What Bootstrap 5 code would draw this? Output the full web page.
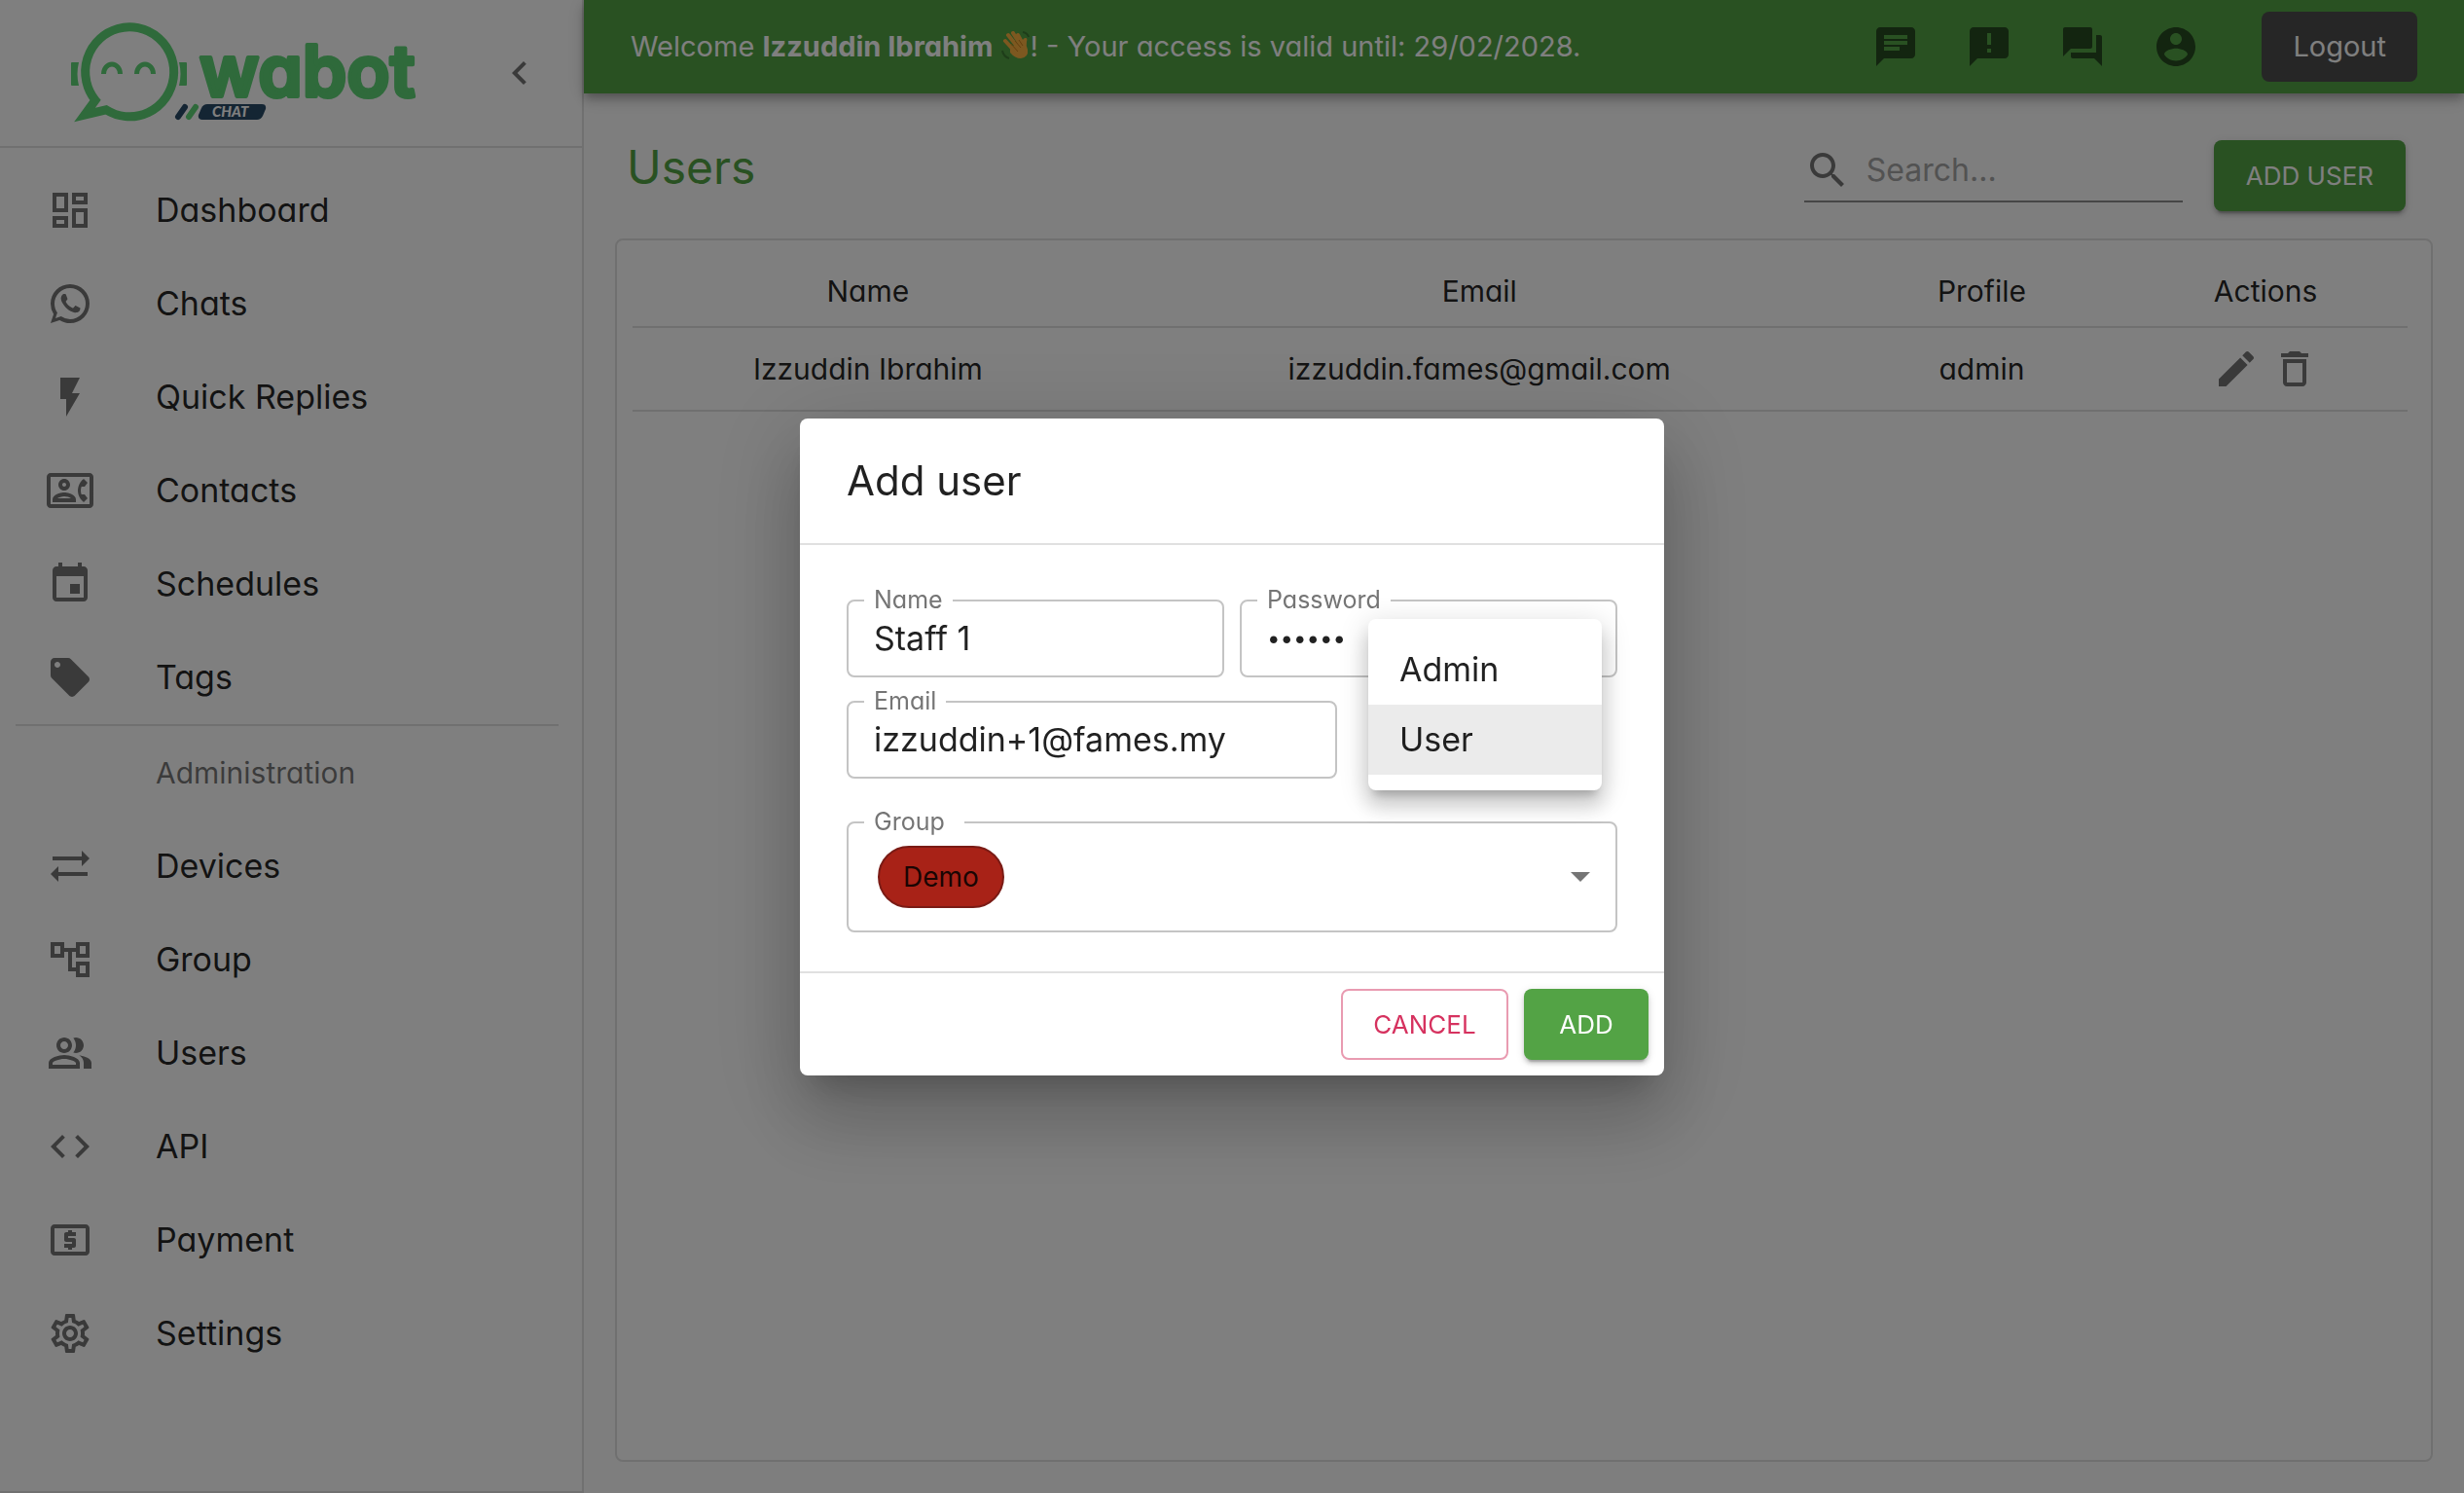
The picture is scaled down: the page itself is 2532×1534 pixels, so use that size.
<!DOCTYPE html>
<html lang="en">
<head>
<meta charset="utf-8">
<meta name="viewport" content="width=device-width, initial-scale=1">
<title>Wabot - Users</title>
<link href="https://cdn.jsdelivr.net/npm/bootstrap@5.3.0/dist/css/bootstrap.min.css" rel="stylesheet">
<style>
  :root {
    --brand: #53a345;
    --ink: rgba(0, 0, 0, .87);
    --muted: rgba(0, 0, 0, .54);
    --line: #e0e0e0;
  }
  body {
    font-family: Inter, "Open Sans", sans-serif;
    font-feature-settings: "cv11";
    font-size: 34px;
    line-height: 48px;
    color: var(--ink);
    background: #fcfcfc;
  }
  .mi { width: 48px; height: 48px; fill: currentColor; flex: none; display: block; }

  /* Drawer */
  .drawer { width: 600px; background: #fff; border-right: 2px solid var(--line); border-bottom: 2px solid var(--line); }
  .drawer-head { height: 152px; border-bottom: 2px solid var(--line); padding: 0 40px 0 72px; }
  .logo { width: 356px; height: 108px; }
  .drawer .icon-btn { color: #757575; }
  .menu-link { display: flex; align-items: center; height: 96px; padding: 0 48px; gap: 64px; color: var(--ink); text-decoration: none; }
  .menu-link .mi { color: #757575; }
  .menu-rule { height: 2px; background: var(--line); margin: 0 24px 0 16px; }
  .menu-title { height: 96px; line-height: 96px; padding-left: 160px; font-size: 30px; color: var(--muted); }
  .icon-btn { border: 0; background: none; padding: 0; color: inherit; }

  /* Top bar */
  .topbar { height: 96px; background: var(--brand); padding: 0 48px; z-index: 2;
    box-shadow: 0 4px 8px -2px rgba(0,0,0,.2), 0 8px 10px rgba(0,0,0,.14), 0 2px 20px rgba(0,0,0,.12); }
  .topbar .icons { gap: 48px; margin-right: 64px; color: #264b20; }
  .welcome { color: #fff; font-size: 29px; }
  .welcome b { font-weight: 700; }
  .wave { width: 30px; height: 30px; vertical-align: -4px; }
  .btn-ui { font-size: 26px; line-height: 49px; padding: 12px 33px; border-radius: 8px; border: 0; min-width: 128px; }
  .btn-dark-ui { background: #4c4c4c; color: #fff; font-size: 29px; line-height: 48px; padding: 12px 32px; }
  .btn-brand { background: var(--brand); color: #fff;
    box-shadow: 0 6px 2px -4px rgba(0,0,0,.2), 0 4px 4px rgba(0,0,0,.14), 0 2px 10px rgba(0,0,0,.12); }
  .btn-cancel { color: #d6325f; border: 2px solid #e99bb1; padding: 10px 30px; background: #fff; min-width: 172px; }

  /* Page */
  .page { padding: 48px 32px 32px; }
  .page-title { font-size: 48px; line-height: 56px; font-weight: 400; color: var(--brand); margin: 0; }
  .page-head { padding: 0 28px 0 12px; margin-bottom: 28px; }
  .search { width: 389px; height: 64px; border-bottom: 2px solid #8c8c8c; margin-right: 32px; color: #757575; }
  .search input { border: 0; outline: 0; background: none; min-width: 0; flex: 1; padding: 0 0 0 16px; font-size: 32px; }
  .search input::placeholder { color: #a4a4a4; opacity: 1; }
  .panel { background: #fff; border: 2px solid var(--line); border-radius: 8px; padding: 16px 24px 16px 16px; }
  .users { font-size: 30px; margin: 0; table-layout: fixed; border-color: var(--line); --bs-table-bg: transparent; --bs-table-color: var(--ink); }
  .users th, .users td { font-weight: 400; text-align: center; vertical-align: middle; padding: 12px 48px 12px 32px; border-bottom: 2px solid var(--line); }
  .users th:last-child, .users td:last-child { padding-right: 32px; }
  .users .acts { color: #757575; gap: 12px; height: 60px; }

  /* Dialog */
  .modal-dialog { max-width: 888px; }
  .modal-content { border: 0; border-radius: 8px; color: var(--ink);
    box-shadow: 0 22px 30px -14px rgba(0,0,0,.2), 0 48px 76px 6px rgba(0,0,0,.14), 0 18px 92px 16px rgba(0,0,0,.12); }
  .dlg-head { padding: 32px 48px; border-bottom: 2px solid var(--line); }
  .dlg-head h2 { font-size: 42px; line-height: 64px; font-weight: 400; margin: 0; }
  .dlg-body { padding: 56px 48px 40px; }
  .dlg-foot { padding: 16px; gap: 16px; border-top: 2px solid var(--line); }
  .outlined { position: relative; }
  .outlined label { position: absolute; top: -14px; left: 18px; padding: 0 10px; background: #fff; font-size: 25px; line-height: 28px; color: #757575; z-index: 1; }
  .outlined input, .chip-select { width: 100%; border: 2px solid #c4c4c4; border-radius: 8px; padding: 0 26px; background: #fff; color: var(--ink); outline: 0; }
  .outlined input { height: 80px; }
  .outlined input[type=password] { font-size: 24px; }
  .email-box { width: 504px; }
  .group-box { margin-top: 44px; }
  .group-box label { padding-right: 20px; }
  .chip-select { height: 114px; padding: 0 26px 0 30px; }
  .chip { background: #a82217; border: 2px solid #7a1b15; border-radius: 32px; height: 64px; line-height: 60px; padding: 0 24px; font-size: 28px; }
  .caret { border: 10px solid transparent; border-top-color: #757575; border-bottom: 0; }
  .role-slot { position: relative; width: 240px; margin: 0 16px 0 32px; }
  .role-menu { top: -84px; left: 0; width: 240px; border: 0; border-radius: 8px; padding: 16px 0; margin: 0; font-size: 34px;
    box-shadow: 0 10px 10px -6px rgba(0,0,0,.2), 0 16px 20px 2px rgba(0,0,0,.14), 0 6px 28px 4px rgba(0,0,0,.12); }
  .role-menu .dropdown-item { padding: 12px 32px; line-height: 48px; color: var(--ink); }
  .role-menu .dropdown-item.active { background: #ebebeb; }
</style>
<script src="https://cdn.jsdelivr.net/npm/bootstrap@5.3.0/dist/js/bootstrap.bundle.min.js"></script>
</head>
<body class="vh-100 overflow-hidden">
<div class="d-flex h-100">
  <aside class="drawer flex-shrink-0">
    <div class="drawer-head d-flex align-items-center justify-content-between">
      <svg class="logo" viewBox="72 21 356 108" role="img" aria-label="wabot chat">
        <path d="M98 103A45.500 46 0 1 1 109 112.800L87 118Z" fill="none" stroke="#5ed476" stroke-width="9"/>
        <path d="M74 64h7q-3 12 0 24h-7q-1 0-1-1V65q0-1 1-1zM184 64h7q1 0 1 1v22q0 1-1 1h-7q3-12 0-24z" fill="#5ed476"/>
        <path d="M106.500 76a8.500 10 0 0 1 17 0M140.500 76a8.500 10 0 0 1 17 0" fill="none" stroke="#5ed476" stroke-width="5"/>
        <text x="205" y="99" font-family="Inter" font-size="73" font-weight="600" fill="#5ed476" stroke="#5ed476" stroke-width="4" stroke-linejoin="round">wabot</text>
        <path d="M183 120l7-10" stroke="#284a66" stroke-width="6" stroke-linecap="round"/>
        <path d="M194 120l7-10" stroke="#5ed476" stroke-width="6" stroke-linecap="round"/>
        <path d="M213 107h56q5 0 4 5l-3 7q-2 4-6 4h-56q-5 0-4-5l3-7q2-4 6-4z" fill="#284a66"/>
        <text x="218" y="120" font-family="Lato" font-size="15" font-weight="900" font-style="italic" fill="#fff">CHAT</text>
      </svg>
      <button class="icon-btn" type="button" aria-label="Collapse menu"><svg class="mi" viewBox="0 0 24 24"><path d="M15.410 7.410L14 6l-6 6 6 6 1.410-1.410L10.830 12z"/></svg></button>
    </div>
    <nav class="pt-3" aria-label="Main">
      <a class="menu-link" href="#"><svg class="mi" viewBox="0 0 24 24"><path d="M19 5v2h-4V5h4M9 5v6H5V5h4m10 8v6h-4v-6h4M9 17v2H5v-2h4M21 3h-8v6h8V3zM11 3H3v10h8V3zm10 8h-8v10h8V11zm-10 4H3v6h8v-6z"/></svg><span>Dashboard</span></a>
      <a class="menu-link" href="#"><svg class="mi" viewBox="0 0 24 24"><path d="M16.750 13.960c.25.13.41.2.46.3.06.11.04.61-.21 1.180-.2.56-1.240 1.100-1.700 1.120-.46.02-.47.36-2.960-.73-2.490-1.090-3.990-3.750-4.110-3.920-.12-.17-.96-1.380-.92-2.610.05-1.220.69-1.800.95-2.040.24-.26.51-.29.68-.26h.47c.15 0 .36-.06.55.45l.69 1.870c.06.13.1.28.01.44l-.27.41-.39.42c-.12.12-.26.25-.12.5.12.26.62 1.090 1.320 1.780.91.88 1.710 1.170 1.950 1.300.24.14.39.12.54-.04l.81-.94c.19-.25.35-.19.58-.11l1.670.88M12 2a10 10 0 0 1 10 10 10 10 0 0 1-10 10c-1.970 0-3.800-.57-5.350-1.550L2 22l1.550-4.650A9.969 9.969 0 0 1 2 12 10 10 0 0 1 12 2m0 2a8 8 0 0 0-8 8c0 1.720.54 3.310 1.460 4.610L4.500 19.500l2.890-.96A7.950 7.950 0 0 0 12 20a8 8 0 0 0 8-8 8 8 0 0 0-8-8z"/></svg><span>Chats</span></a>
      <a class="menu-link" href="#"><svg class="mi" viewBox="0 0 24 24"><path d="M7 2v11h3v9l7-12h-4l4-8z"/></svg><span>Quick Replies</span></a>
      <a class="menu-link" href="#"><svg class="mi" viewBox="0 0 24 24"><path d="M22 3H2C.9 3 0 3.900 0 5v14c0 1.100.9 2 2 2h20c1.100 0 1.990-.9 1.990-2L24 5c0-1.100-.9-2-2-2zm0 16H2V5h20v14zm-2.990-1.010L21 16l-1.510-2h-1.640c-.22-.63-.35-1.300-.35-2s.13-1.370.35-2h1.640L21 8l-1.990-1.990c-1.310.98-2.280 2.370-2.730 3.990-.18.64-.28 1.310-.28 2s.1 1.360.28 2c.45 1.610 1.420 3.010 2.730 3.990zM9 12c1.650 0 3-1.350 3-3s-1.350-3-3-3-3 1.350-3 3 1.350 3 3 3zm0-4c.55 0 1 .45 1 1s-.45 1-1 1-1-.45-1-1 .45-1 1-1zm6 8.590c0-2.500-3.970-3.580-6-3.580s-6 1.080-6 3.580V18h12v-1.410zM5.480 16c.74-.5 2.220-1 3.520-1s2.770.49 3.520 1H5.480z"/></svg><span>Contacts</span></a>
      <a class="menu-link" href="#"><svg class="mi" viewBox="0 0 24 24"><path d="M17 12h-5v5h5v-5zM16 1v2H8V1H6v2H5c-1.110 0-1.990.9-1.990 2L3 19c0 1.100.89 2 2 2h14c1.100 0 2-.9 2-2V5c0-1.100-.9-2-2-2h-1V1h-2zm3 18H5V8h14v11z"/></svg><span>Schedules</span></a>
      <a class="menu-link" href="#"><svg class="mi" viewBox="0 0 24 24"><path d="M21.410 11.580l-9-9C12.050 2.220 11.550 2 11 2H4c-1.100 0-2 .9-2 2v7c0 .55.22 1.050.59 1.420l9 9c.36.36.86.58 1.410.58.55 0 1.050-.22 1.410-.59l7-7c.37-.36.59-.86.59-1.410 0-.55-.23-1.060-.59-1.420zM5.500 7C4.670 7 4 6.330 4 5.500S4.670 4 5.500 4 7 4.670 7 5.500 6.330 7 5.500 7z"/></svg><span>Tags</span></a>
      <div class="menu-rule"></div>
      <div class="menu-title">Administration</div>
      <a class="menu-link" href="#"><svg class="mi" viewBox="0 0 24 24"><path d="M22 8l-4-4v3H3v2h15v3l4-4zM2 16l4 4v-3h15v-2H6v-3l-4 4z"/></svg><span>Devices</span></a>
      <a class="menu-link" href="#"><svg class="mi" viewBox="0 0 24 24"><path d="M22 11V3h-7v3H9V3H2v8h7V8h2v10h4v3h7v-8h-7v3h-2V8h2v3h7zM7 9H4V5h3v4zm10 6h3v4h-3v-4zm0-10h3v4h-3V5z"/></svg><span>Group</span></a>
      <a class="menu-link" href="#"><svg class="mi" viewBox="0 0 24 24"><path d="M16.670 13.130C18.040 14.060 19 15.320 19 17v3h4v-3c0-2.180-3.570-3.470-6.330-3.870zM15 12c2.210 0 4-1.790 4-4s-1.790-4-4-4c-.47 0-.91.1-1.330.24C14.500 5.270 15 6.580 15 8s-.5 2.730-1.330 3.760c.42.14.86.24 1.330.24zM9 12c2.210 0 4-1.790 4-4s-1.790-4-4-4-4 1.790-4 4 1.790 4 4 4zm0-6c1.100 0 2 .9 2 2s-.9 2-2 2-2-.9-2-2 .9-2 2-2zM9 13c-2.670 0-8 1.340-8 4v3h16v-3c0-2.660-5.330-4-8-4zm6 5H3v-.99C3.200 16.290 6.300 15 9 15s5.800 1.290 6 2v1z"/></svg><span>Users</span></a>
      <a class="menu-link" href="#"><svg class="mi" viewBox="0 0 24 24"><path d="M9.400 16.600L4.800 12l4.600-4.600L8 6l-6 6 6 6 1.400-1.400zm5.200 0l4.600-4.600-4.600-4.600L16 6l6 6-6 6-1.400-1.400z"/></svg><span>API</span></a>
      <a class="menu-link" href="#"><svg class="mi" viewBox="0 0 24 24"><path d="M11 17h2v-1h1c.55 0 1-.45 1-1v-3c0-.55-.45-1-1-1h-3v-1h4V8h-2V7h-2v1h-1c-.55 0-1 .45-1 1v3c0 .55.45 1 1 1h3v1H9v2h2v1zm9-13H4c-1.110 0-1.990.89-1.990 2L2 18c0 1.110.89 2 2 2h16c1.110 0 2-.89 2-2V6c0-1.110-.89-2-2-2zm0 14H4V6h16v12z"/></svg><span>Payment</span></a>
      <a class="menu-link" href="#"><svg class="mi" viewBox="0 0 24 24"><path d="M19.430 12.980c.04-.32.07-.64.07-.98 0-.34-.03-.66-.07-.98l2.110-1.650c.19-.15.24-.42.12-.64l-2-3.460c-.09-.16-.26-.25-.44-.25-.06 0-.12.01-.17.03l-2.490 1c-.52-.4-1.080-.73-1.690-.98l-.38-2.650C14.460 2.180 14.250 2 14 2h-4c-.25 0-.46.18-.49.42l-.38 2.650c-.61.25-1.170.59-1.690.98l-2.490-1c-.06-.02-.12-.03-.18-.03-.17 0-.34.09-.43.25l-2 3.460c-.13.22-.07.49.12.64l2.110 1.650c-.04.32-.07.65-.07.98 0 .33.03.66.07.98l-2.110 1.650c-.19.15-.24.42-.12.64l2 3.460c.09.16.26.25.44.25.06 0 .12-.01.17-.03l2.490-1c.52.4 1.080.73 1.690.98l.38 2.650c.03.24.24.42.49.42h4c.25 0 .46-.18.49-.42l.38-2.650c.61-.25 1.170-.59 1.690-.98l2.490 1c.06.02.12.03.18.03.17 0 .34-.09.43-.25l2-3.460c.12-.22.07-.49-.12-.64l-2.110-1.650zm-1.980-1.710c.04.31.05.52.05.73 0 .21-.02.43-.05.73l-.14 1.130.89.7 1.080.84-.7 1.210-1.270-.51-1.040-.42-.9.68c-.43.32-.84.56-1.250.73l-1.060.43-.16 1.130-.2 1.350h-1.400l-.19-1.350-.16-1.130-1.060-.43c-.43-.18-.83-.41-1.230-.71l-.91-.7-1.060.43-1.270.51-.7-1.210 1.080-.84.89-.7-.14-1.130c-.03-.31-.05-.54-.05-.74s.02-.43.05-.73l.14-1.130-.89-.7-1.080-.84.7-1.210 1.270.51 1.040.42.9-.68c.43-.32.84-.56 1.250-.73l1.060-.43.16-1.130.2-1.350h1.390l.19 1.350.16 1.130 1.060.43c.43.18.83.41 1.230.71l.91.7 1.060-.43 1.270-.51.7 1.210-1.070.85-.89.7.14 1.130zM12 8c-2.210 0-4 1.790-4 4s1.790 4 4 4 4-1.790 4-4-1.790-4-4-4zm0 6c-1.100 0-2-.9-2-2s.9-2 2-2 2 .9 2 2-.9 2-2 2z"/></svg><span>Settings</span></a>
    </nav>
  </aside>

  <div class="d-flex flex-column flex-grow-1">
    <header class="topbar d-flex align-items-center position-relative">
      <div class="welcome flex-grow-1">Welcome <b>Izzuddin Ibrahim</b> <svg class="wave" viewBox="0 0 30 30" role="img" aria-label="waving hand"><path d="M7 4l11 14M12 2l9 14M17 4l6 11M4 10l10 11" stroke="#fbb040" stroke-width="4" stroke-linecap="round"/><path d="M9 16L21 12q1-5 4-5 2 0 1 4-1 4 1 8 1 8-7 9-6 0-11-6z" fill="#fbb040"/><path d="M14 10l6 7M10 13l7 8M18 9l4 6" stroke="#c77f1e" stroke-width="1"/><path d="M1 20q1 6 7 8M22 1q5 1 6 5" fill="none" stroke="#3c7a33" stroke-width="2"/></svg>! - Your access is valid until: 29/02/2028.</div>
      <div class="icons d-flex">
        <button class="icon-btn" type="button" aria-label="Messages"><svg class="mi" viewBox="0 0 24 24"><path d="M20 2H4c-1.100 0-1.990.9-1.990 2L2 22l4-4h14c1.100 0 2-.9 2-2V4c0-1.100-.9-2-2-2zM6 9h12v2H6V9zm8 5H6v-2h8v2zm4-6H6V6h12v2z"/></svg></button>
        <button class="icon-btn" type="button" aria-label="Announcements"><svg class="mi" viewBox="0 0 24 24"><path d="M20 2H4c-1.100 0-1.990.9-1.990 2L2 22l4-4h14c1.100 0 2-.9 2-2V4c0-1.100-.9-2-2-2zm-7 9h-2V5h2v6zm0 4h-2v-2h2v2z"/></svg></button>
        <button class="icon-btn" type="button" aria-label="Internal chat"><svg class="mi" viewBox="0 0 24 24"><path d="M21 6h-2v9H6v2c0 .55.45 1 1 1h11l4 4V7c0-.55-.45-1-1-1zm-4 6V3c0-.55-.45-1-1-1H3c-.55 0-1 .45-1 1v14l4-4h10c.55 0 1-.45 1-1z"/></svg></button>
        <button class="icon-btn" type="button" aria-label="Account"><svg class="mi" viewBox="0 0 24 24"><path d="M12 2C6.480 2 2 6.480 2 12s4.480 10 10 10 10-4.480 10-10S17.520 2 12 2zm0 3c1.660 0 3 1.340 3 3s-1.340 3-3 3-3-1.340-3-3 1.340-3 3-3zm0 14.200c-2.500 0-4.710-1.280-6-3.220.03-1.990 4-3.080 6-3.080 1.990 0 5.970 1.090 6 3.080-1.290 1.940-3.500 3.220-6 3.220z"/></svg></button>
      </div>
      <button class="btn btn-ui btn-dark-ui" type="button">Logout</button>
    </header>

    <main class="page d-flex flex-column flex-grow-1">
      <div class="page-head d-flex align-items-start">
        <h1 class="page-title flex-grow-1">Users</h1>
        <label class="search d-flex align-items-center" aria-label="Search">
          <svg class="mi" viewBox="0 0 24 24"><path d="M15.500 14h-.79l-.28-.27C15.410 12.590 16 11.110 16 9.500 16 5.910 13.090 3 9.500 3S3 5.910 3 9.500 5.910 16 9.500 16c1.610 0 3.090-.59 4.230-1.570l.27.28v.79l5 4.990L20.490 19l-4.990-5zm-6 0C7.010 14 5 11.990 5 9.500S7.010 5 9.500 5 14 7.010 14 9.500 11.990 14 9.500 14z"/></svg>
          <input type="search" placeholder="Search...">
        </label>
        <button class="btn btn-ui btn-brand" type="button">ADD USER</button>
      </div>
      <section class="panel flex-grow-1">
        <table class="table users">
          <colgroup><col style="width:27.4%"><col style="width:41.5%"><col style="width:15.1%"><col style="width:16%"></colgroup>
          <thead><tr><th scope="col">Name</th><th scope="col">Email</th><th scope="col">Profile</th><th scope="col">Actions</th></tr></thead>
          <tbody><tr>
            <td>Izzuddin Ibrahim</td><td>izzuddin.fames@gmail.com</td><td>admin</td>
            <td><div class="acts d-flex align-items-center justify-content-center">
              <button class="icon-btn" type="button" aria-label="Edit"><svg class="mi" viewBox="0 0 24 24"><path d="M3 17.250V21h3.750L17.810 9.940l-3.750-3.750L3 17.250zM20.710 7.040c.39-.39.39-1.020 0-1.410l-2.340-2.340c-.39-.39-1.020-.39-1.410 0l-1.830 1.830 3.750 3.750 1.830-1.830z"/></svg></button>
              <button class="icon-btn" type="button" aria-label="Delete"><svg class="mi" viewBox="0 0 24 24"><path d="M6 19c0 1.100.9 2 2 2h8c1.100 0 2-.9 2-2V7H6v12zM8 9h8v10H8V9zm7.500-5l-1-1h-5l-1 1H5v2h14V4z"/></svg></button>
            </div></td>
          </tr></tbody>
        </table>
      </section>
    </main>
  </div>
</div>

<div class="modal-backdrop show"></div>
<div class="modal d-block" role="dialog" aria-modal="true" aria-labelledby="dlgTitle">
  <div class="modal-dialog modal-dialog-centered">
    <form class="modal-content">
      <div class="dlg-head"><h2 id="dlgTitle">Add user</h2></div>
      <div class="dlg-body">
        <div class="d-flex gap-3 mb-4">
          <div class="outlined w-50"><label for="fName">Name</label><input id="fName" type="text" value="Staff 1"></div>
          <div class="outlined w-50"><label for="fPass">Password</label><input id="fPass" type="password" value="secret"></div>
        </div>
        <div class="d-flex">
          <div class="outlined email-box"><label for="fMail">Email</label><input id="fMail" type="email" value="izzuddin+1@fames.my"></div>
          <div class="role-slot">
            <div class="dropdown-menu show role-menu" role="listbox" aria-label="Profile">
              <button class="dropdown-item" type="button" role="option" aria-selected="false">Admin</button>
              <button class="dropdown-item active" type="button" role="option" aria-selected="true">User</button>
            </div>
          </div>
        </div>
        <div class="outlined group-box"><label for="fGroup">Group</label>
          <button id="fGroup" class="chip-select d-flex align-items-center justify-content-between" type="button"><span class="chip">Demo</span><span class="caret"></span></button>
        </div>
      </div>
      <div class="dlg-foot d-flex justify-content-end">
        <button class="btn btn-ui btn-cancel" type="button">CANCEL</button>
        <button class="btn btn-ui btn-brand" type="submit">ADD</button>
      </div>
    </form>
  </div>
</div>
</body>
</html>
